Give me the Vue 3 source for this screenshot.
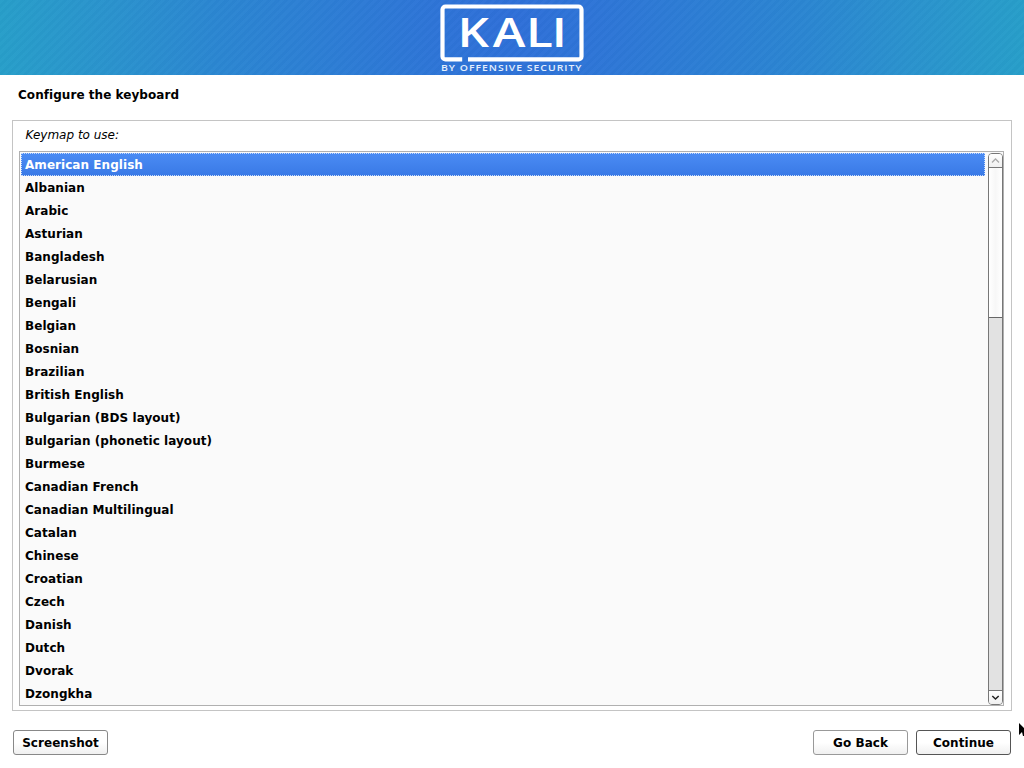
<script setup>
const keymaps = [
  'American English', 'Albanian', 'Arabic', 'Asturian', 'Bangladesh', 'Belarusian',
  'Bengali', 'Belgian', 'Bosnian', 'Brazilian', 'British English',
  'Bulgarian (BDS layout)', 'Bulgarian (phonetic layout)', 'Burmese',
  'Canadian French', 'Canadian Multilingual', 'Catalan', 'Chinese', 'Croatian',
  'Czech', 'Danish', 'Dutch', 'Dvorak', 'Dzongkha',
]
const selected = 'American English'
</script>

<template>
  <div class="installer">
    <header class="banner">
      <svg class="logo" width="148" height="75" viewBox="0 0 148 75">
        <path d="M24.200 59.400H7.500a3 3 0 0 1-3-3V9.500A3 3 0 0 1 7.500 6.500H140.500a3 3 0 0 1 3 3V56.400a3 3 0 0 1-3 3H30" fill="none" stroke="#fff" stroke-width="4.200" />
        <text class="kali" transform="scale(1.25 1)" x="15.600 43.800 70.500 91.100" y="47.200">KALI</text>
        <text class="tagline" x="3" y="70.500" textLength="141.500" lengthAdjust="spacingAndGlyphs">BY OFFENSIVE SECURITY</text>
      </svg>
    </header>
    <h1 class="title">Configure the keyboard</h1>
    <main class="panel">
      <div class="prompt">Keymap to use:</div>
      <div class="list">
        <ul class="rows">
          <li v-for="k in keymaps" :key="k" class="row" :class="{ selected: k === selected }">{{ k }}</li>
        </ul>
        <div class="scrollbar">
          <div class="step up">
            <svg width="13" height="13" viewBox="0 0 13 13"><path d="M3 8.500L6.500 5L10 8.500" fill="none" stroke="#aaa" stroke-width="1.300" /></svg>
          </div>
          <div class="thumb"></div>
          <div class="trough"></div>
          <div class="step down">
            <svg width="13" height="13" viewBox="0 0 13 13"><path d="M3.300 5L6.500 8L9.700 5" fill="none" stroke="#222" stroke-width="1.500" /></svg>
          </div>
        </div>
      </div>
    </main>
    <footer class="actions">
      <button class="btn shot">Screenshot</button>
      <button class="btn back">Go Back</button>
      <button class="btn next">Continue</button>
    </footer>
    <svg class="cursor" width="5" height="14" viewBox="0 0 5 14"><path d="M0 0L5 5V13H4L3 9L0 12Z" fill="#000" /></svg>
  </div>
</template>

<style>
body {
  margin: 0;
  overflow: hidden;
}
</style>

<style scoped>
.installer {
  position: relative;
  box-sizing: border-box;
  width: 1024px;
  height: 768px;
  display: flex;
  flex-direction: column;
  background: #fff;
  color: #000;
  font: bold 12px "DejaVu Sans", sans-serif;
  letter-spacing: 0.05px;
}
.banner {
  height: 75px;
  display: flex;
  justify-content: center;
  background:
    repeating-linear-gradient(135deg, rgba(255, 255, 255, 0.014) 0 3px, rgba(0, 0, 0, 0.012) 3px 6px),
    radial-gradient(circle 512px at 512px 20px, #2f6fd8 0%, #2e74d7 15%, #2b86d1 58%, #2a92cd 78%, #279ec9 100%);
}
.logo {
  display: block;
}
.kali {
  font: 600 39.500px "Open Sans", sans-serif;
  letter-spacing: 0;
  fill: #fff;
}
.tagline {
  font: 600 8.400px "Open Sans", sans-serif;
  letter-spacing: 0.8px;
  fill: #e4eefc;
}
.title {
  box-sizing: border-box;
  margin: 0;
  padding: 1px 18px 0;
  height: 45px;
  line-height: 39px;
  font-size: 12px;
}
.panel {
  box-sizing: border-box;
  width: 1000px;
  height: 591px;
  margin-left: 12px;
  padding: 0 7px 0 6px;
  border: 1px solid #c4c4c4;
}
.prompt {
  box-sizing: border-box;
  height: 30px;
  padding: 1px 0 0 6.500px;
  line-height: 27px;
  font-weight: normal;
  font-style: italic;
  letter-spacing: 0;
}
.list {
  box-sizing: border-box;
  width: 985px;
  height: 555px;
  padding: 1px 0 1px 1px;
  border: 1px solid #b0b0b0;
  background: #fafafa;
  display: flex;
  justify-content: space-between;
}
.rows {
  margin: 0;
  padding: 0;
  list-style: none;
  width: 964px;
}
.row {
  box-sizing: border-box;
  height: 23px;
  padding: 1px 0 0 3px;
  border: 1px solid transparent;
  line-height: 21px;
  white-space: nowrap;
}
.selected {
  color: #fff;
  border: 1px dotted #c7dafa;
  background: linear-gradient(#4b8cf4, #3979e6) border-box;
}
.scrollbar {
  box-sizing: border-box;
  width: 15px;
  height: 552px;
  border: 1px solid #777;
  border-radius: 4px;
  overflow: hidden;
  display: flex;
  flex-direction: column;
}
.step {
  height: 13px;
  background: linear-gradient(#fff, #f0f0f0);
}
.step svg {
  display: block;
}
.up {
  border-bottom: 1px solid #777;
}
.down {
  border-top: 1px solid #777;
}
.thumb {
  height: 149px;
  background: linear-gradient(90deg, #fff, #f7f7f7 50%, #fff);
  border-bottom: 1px solid #666;
}
.trough {
  flex: 1;
  background: #e2e2e2;
}
.actions {
  display: flex;
  gap: 8px;
  padding: 19px 13px 0;
}
.btn {
  box-sizing: border-box;
  width: 95px;
  height: 25px;
  padding: 1px 0 0;
  border: 1px solid #888;
  border-radius: 3px;
  background: linear-gradient(#fff 50%, #f0f0f0);
  color: #000;
  font: inherit;
  letter-spacing: inherit;
}
.shot {
  margin-right: auto;
}
.back {
  border-color: #999;
}
.next {
  border-color: #555;
}
.cursor {
  position: absolute;
  left: 1019px;
  top: 723px;
}
</style>
